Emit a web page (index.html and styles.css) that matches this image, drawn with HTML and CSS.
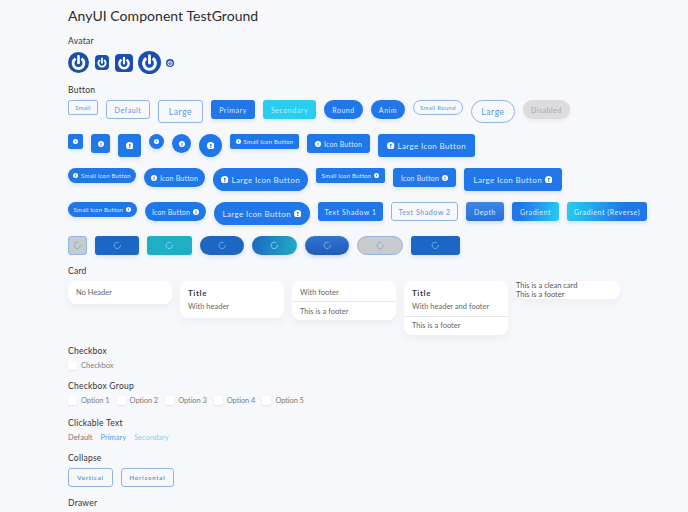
FILE: index.html
```html
<!DOCTYPE html>
<html lang="en">
<head>
<meta charset="utf-8">
<title>AnyUI Component TestGround</title>
<link rel="stylesheet" href="styles.css">
</head>
<body>
<svg class="defs" width="0" height="0" aria-hidden="true">
  <symbol id="info" viewBox="0 0 24 24"><circle cx="12" cy="12" r="12" fill="#fff"/><rect x="10" y="5.5" width="4" height="9" rx="2" fill="#2176e8"/><circle cx="12" cy="17.5" r="2" fill="#2176e8"/></symbol>
  <symbol id="power" viewBox="0 0 24 24"><path d="M8.6 7.6a6.2 6.2 0 1 0 6.8 0" fill="none" stroke="#fff" stroke-width="3.2"/><path d="M12 5v7.5" fill="none" stroke="#fff" stroke-width="3" stroke-linecap="round"/></symbol>
  <symbol id="spin" viewBox="0 0 24 24"><path d="M15.5 4A9 9 0 1 0 21 12" fill="none" stroke="currentColor" stroke-width="2.2" stroke-linecap="round"/></symbol>
</svg>
<main class="page">
  <h1 class="title">AnyUI Component TestGround</h1>

  <section class="section">
    <h2 class="heading">Avatar</h2>
    <div class="avatars">
      <span class="avatar av-21 round"><svg class="av-icon"><use href="#power"/></svg></span>
      <span class="avatar av-15 sq"><svg class="av-icon"><use href="#power"/></svg></span>
      <span class="avatar av-18 sq"><svg class="av-icon"><use href="#power"/></svg></span>
      <span class="avatar av-23 round"><svg class="av-icon"><use href="#power"/></svg></span>
      <span class="avatar av-7 round"><svg class="av-icon"><use href="#power"/></svg></span>
    </div>
  </section>

  <section class="section">
    <h2 class="heading">Button</h2>
    <div class="rows">
      <div class="row">
        <button class="btn s outline w30">Small</button>
        <button class="btn m outline w44">Default</button>
        <button class="btn l outline w45">Large</button>
        <button class="btn m primary w44">Primary</button>
        <button class="btn m secondary w53">Secondary</button>
        <button class="btn m primary pill w39">Round</button>
        <button class="btn m primary pill w34">Anim</button>
        <button class="btn s outline pill w50">Small Round</button>
        <button class="btn l outline pill w44">Large</button>
        <button class="btn m disabled pill w47">Disabled</button>
      </div>
      <div class="row">
        <button class="btn s primary w15"><svg class="ic-xs"><use href="#info"/></svg></button>
        <button class="btn m primary w19"><svg class="ic-s"><use href="#info"/></svg></button>
        <button class="btn l primary w23"><svg class="ic-m"><use href="#info"/></svg></button>
        <button class="btn s primary circle w15"><svg class="ic-xs"><use href="#info"/></svg></button>
        <button class="btn m primary circle w19"><svg class="ic-s"><use href="#info"/></svg></button>
        <button class="btn l primary circle w23"><svg class="ic-m"><use href="#info"/></svg></button>
        <button class="btn s primary ib w69"><svg class="ic-xs"><use href="#info"/></svg>Small Icon Button</button>
        <button class="btn m primary ib w63"><svg class="ic-s"><use href="#info"/></svg>Icon Button</button>
        <button class="btn l primary w97"><svg class="ic-m"><use href="#info"/></svg>Large Icon Button</button>
      </div>
      <div class="row">
        <button class="btn s primary pill ib w68"><svg class="ic-xs"><use href="#info"/></svg>Small Icon Button</button>
        <button class="btn m primary pill ib w61"><svg class="ic-s"><use href="#info"/></svg>Icon Button</button>
        <button class="btn l primary pill w95"><svg class="ic-m"><use href="#info"/></svg>Large Icon Button</button>
        <button class="btn s primary ib w69">Small Icon Button<svg class="ic-xs"><use href="#info"/></svg></button>
        <button class="btn m primary ib w63">Icon Button<svg class="ic-s"><use href="#info"/></svg></button>
        <button class="btn l primary w98">Large Icon Button<svg class="ic-m"><use href="#info"/></svg></button>
      </div>
      <div class="row">
        <button class="btn s primary pill ib w69">Small Icon Button<svg class="ic-xs"><use href="#info"/></svg></button>
        <button class="btn m primary pill ib w61">Icon Button<svg class="ic-s"><use href="#info"/></svg></button>
        <button class="btn l primary pill w96">Large Icon Button<svg class="ic-m"><use href="#info"/></svg></button>
        <button class="btn m primary w65">Text Shadow 1</button>
        <button class="btn m outline w67">Text Shadow 2</button>
        <button class="btn m depth w38">Depth</button>
        <button class="btn m grad w47">Gradient</button>
        <button class="btn m grad-rev w80">Gradient (Reverse)</button>
      </div>
      <div class="row">
        <button class="btn m load-gray w19"><svg class="spin"><use href="#spin"/></svg></button>
        <button class="btn m load-blue w44"><svg class="spin"><use href="#spin"/></svg></button>
        <button class="btn m load-teal w45"><svg class="spin"><use href="#spin"/></svg></button>
        <button class="btn m load-blue pill w44"><svg class="spin"><use href="#spin"/></svg></button>
        <button class="btn m load-grad pill w45"><svg class="spin"><use href="#spin"/></svg></button>
        <button class="btn m load-depth pill w44"><svg class="spin"><use href="#spin"/></svg></button>
        <button class="btn m load-gray pill w46"><svg class="spin"><use href="#spin"/></svg></button>
        <button class="btn m load-blue w49"><svg class="spin"><use href="#spin"/></svg></button>
      </div>
    </div>
  </section>

  <section class="section">
    <h2 class="heading">Card</h2>
    <div class="cards">
      <div class="card"><p class="card-body">No Header</p></div>
      <div class="card"><h3 class="card-title">Title</h3><p class="card-text pad-b7">With header</p></div>
      <div class="card"><p class="card-body tight">With footer</p><p class="card-foot">This is a footer</p></div>
      <div class="card"><h3 class="card-title">Title</h3><p class="card-text pad-b5">With header and footer</p><p class="card-foot alt">This is a footer</p></div>
      <div class="card clean"><p>This is a clean card</p><p>This is a footer</p></div>
    </div>
  </section>

  <section class="section">
    <h2 class="heading">Checkbox</h2>
    <label class="check single"><span class="box"></span>Checkbox</label>
  </section>

  <section class="section">
    <h2 class="heading">Checkbox Group</h2>
    <div class="checks">
      <label class="check opt"><span class="box"></span>Option 1</label>
      <label class="check opt"><span class="box"></span>Option 2</label>
      <label class="check opt"><span class="box"></span>Option 3</label>
      <label class="check opt"><span class="box"></span>Option 4</label>
      <label class="check opt"><span class="box"></span>Option 5</label>
    </div>
  </section>

  <section class="section">
    <h2 class="heading">Clickable Text</h2>
    <div class="links">
      <span class="link">Default</span>
      <span class="link link-primary">Primary</span>
      <span class="link link-secondary">Secondary</span>
    </div>
  </section>

  <section class="section">
    <h2 class="heading">Collapse</h2>
    <div class="row">
      <button class="btn m outline bold w45">Vertical</button>
      <button class="btn m outline bold w53">Horizontal</button>
    </div>
  </section>

  <section class="section">
    <h2 class="heading">Drawer</h2>
  </section>
</main>
</body>
</html>
```

FILE: styles.css
```css
* { box-sizing: border-box; }
html, body { margin: 0; padding: 0; height: 100%; overflow: hidden; }
body { background: #f7f8fb; font-family: "Lato", "Noto Sans", sans-serif; color: #333; }
.defs { position: absolute; }
.page { padding: 9px 0 0 68px; }
.title { margin: 0; font-size: 14px; line-height: 14px; font-weight: 400; letter-spacing: .05px; color: #2b2b2b; }
.section { margin-top: 11px; }
.title + .section { margin-top: 13px; }
.heading { margin: 0 0 5px; font-size: 8.5px; line-height: 10px; font-weight: 400; letter-spacing: .25px; color: #333; }

.avatars { display: flex; align-items: center; height: 23px; }
.avatar { display: flex; flex: none; background: #1a4fae; align-items: center; justify-content: center; }
.av-icon { width: 100%; height: 100%; }
.round { border-radius: 50%; }
.sq { border-radius: 4px; }
.av-21 { width: 21px; height: 21px; margin-right: 6px; }
.av-15 { width: 14px; height: 15px; margin-right: 6px; }
.av-18 { width: 18px; height: 18px; margin-right: 5px; }
.av-23 { width: 23px; height: 23px; margin-right: 5px; }
.av-7 { width: 8px; height: 8px; }

.rows { display: flex; flex-direction: column; gap: 11px; }
.row { display: flex; align-items: flex-start; gap: 8px; }
.btn { display: flex; flex: none; align-items: center; justify-content: center; gap: 3px; padding: 0; border: 0; border-radius: 2px; font-family: inherit; font-weight: 400; white-space: nowrap; letter-spacing: .55px; }
.s { height: 15px; font-size: 6px; letter-spacing: .3px; }
.m { height: 19px; font-size: 7px; border-radius: 3px; }
.l { height: 23px; font-size: 8px; border-radius: 3px; letter-spacing: .35px; }
.l.outline { font-size: 8.5px; letter-spacing: .6px; }
.ib { letter-spacing: .2px; }
.outline { background: transparent; border: 1px solid #8fb4e8; color: #5a93e0; }
.primary { background: #2176e8; color: #dcebff; box-shadow: 0 2px 4px rgba(33,118,232,.14); }
.secondary { background: #28cdf0; color: #bdeefa; box-shadow: 0 2px 4px rgba(40,205,240,.14); }
.pill { border-radius: 12px; }
.circle { border-radius: 50%; }
.disabled { background: #dcdcde; color: #a8a8aa; box-shadow: 0 2px 4px rgba(0,0,0,.06); }
.depth { background: linear-gradient(#3f86e6, #2a6fd8); color: #dcebff; box-shadow: 0 2px 4px rgba(33,90,200,.2); }
.grad { background: linear-gradient(100deg, #2176e8 20%, #28cdf0 100%); color: #dcebff; box-shadow: 0 2px 4px rgba(33,118,232,.18); }
.grad-rev { background: linear-gradient(100deg, #28cdf0 0%, #2176e8 70%); color: #dcf5ff; box-shadow: 0 2px 4px rgba(33,118,232,.18); }
.bold { font-weight: 700; font-size: 6px; letter-spacing: .8px; }
.load-gray { background: #c9cacc; border: 1px solid #8fb4e8; color: #7da4dc; }
.load-blue { background: #1c66c4; color: #85bdf8; box-shadow: 0 2px 4px rgba(28,102,196,.14); }
.load-teal { background: #20aec4; color: #8ce2f0; box-shadow: 0 2px 4px rgba(32,174,196,.14); }
.load-grad { background: linear-gradient(100deg, #1c66c4, #20aec4); color: #a8e2f8; box-shadow: 0 2px 4px rgba(28,102,196,.14); }
.load-depth { background: linear-gradient(#2f75d2, #1f5cb8); color: #8cc0f5; box-shadow: 0 2px 4px rgba(28,80,180,.2); }

.w15 { width: 15px; } .w19 { width: 19px; } .w23 { width: 23px; } .w30 { width: 30px; }
.w34 { width: 34px; } .w38 { width: 38px; } .w39 { width: 39px; } .w44 { width: 44px; }
.w45 { width: 45px; } .w46 { width: 46px; } .w47 { width: 47px; } .w49 { width: 49px; }
.w50 { width: 50px; } .w53 { width: 53px; } .w61 { width: 61px; } .w63 { width: 63px; }
.w65 { width: 65px; } .w67 { width: 67px; } .w68 { width: 68px; } .w69 { width: 69px; }
.w80 { width: 80px; } .w95 { width: 95px; } .w96 { width: 96px; } .w97 { width: 97px; }
.w98 { width: 98px; }
.ic-xs { width: 5px; height: 5px; flex: none; }
.ic-s { width: 6px; height: 6px; flex: none; }
.ic-m { width: 7.5px; height: 7.5px; flex: none; }
.spin { width: 8.5px; height: 8.5px; flex: none; }

.cards { display: flex; align-items: flex-start; gap: 8px; height: 54px; }
.card { width: 104px; flex: none; background: #fff; border-radius: 8px; box-shadow: 0 3px 8px rgba(30,50,90,.06); font-size: 7.5px; line-height: 9px; color: #666; }
.card p { margin: 0; }
.card .card-body { padding: 7px 8px; }
.card .card-body.tight { padding-bottom: 4px; }
.card-title { margin: 0; padding: 7px 8px 4px; font-size: 8px; line-height: 10px; font-weight: 700; letter-spacing: .6px; color: #3a3a3a; }
.card .card-text { padding: 0 8px; }
.card .pad-b7 { padding-bottom: 7px; }
.card .pad-b5 { padding-bottom: 5px; }
.card .card-foot { padding: 5px 8px 4px; border-top: 1px solid #e6e7ea; }
.card .card-foot.alt { padding: 4px 8px 5px; }
.clean { color: #555; }

.check { display: flex; align-items: flex-start; gap: 4px; height: 11px; font-size: 7.5px; line-height: 9px; color: #808080; }
.check.single { height: 9px; }
.box { width: 9px; height: 9px; flex: none; background: #fff; border-radius: 2px; box-shadow: 0 1px 2px rgba(30,50,90,.12); }
.checks { display: flex; }
.opt { width: 48.6px; letter-spacing: -.1px; }
.links { display: flex; gap: 8px; height: 9px; font-size: 7.5px; line-height: 9px; }
.link { color: #777; }
.link-primary { color: #5a9ae8; }
.link-secondary { color: #7fd0ea; }
```
